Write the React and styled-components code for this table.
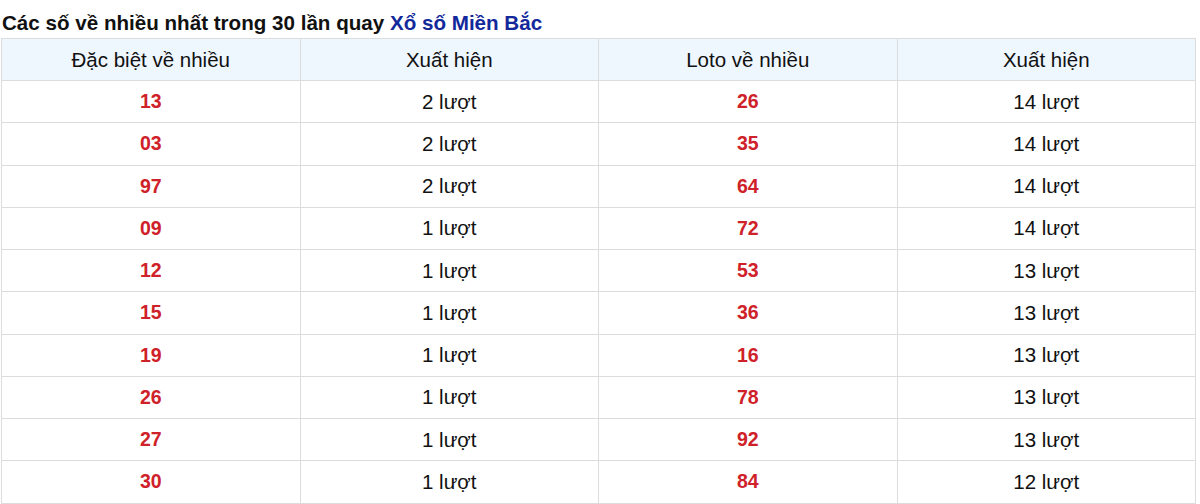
import React from "react";
import styled, { createGlobalStyle } from "styled-components";

const Global = createGlobalStyle`
  html, body { margin: 0; padding: 0; background: #fff; }
  body { font-family: "Liberation Sans", Arial, sans-serif; }
`;

const Wrap = styled.div`
  width: 1196px;
  padding: 10px 0 0 1px;
`;

const Title = styled.h3`
  margin: 0 0 3px 1px;
  font-size: 20.6px;
  line-height: 25px;
  font-weight: 700;
  color: #111;
`;

const Link = styled.span`
  color: #13299b;
`;

const Table = styled.table`
  width: 1195px;
  border-collapse: collapse;
  table-layout: fixed;
`;

const Th = styled.th`
  height: 41px;
  padding: 0;
  background: #eef6fe;
  border: 1px solid #dcdcdc;
  font-weight: 400;
  font-size: 20.5px;
  color: #111;
  text-align: center;
`;

const Td = styled.td`
  height: 41.25px;
  padding: 0;
  border: 1px solid #dcdcdc;
  font-size: ${(p) => (p.$num ? "19.5px" : "20.5px")};
  text-align: center;
  color: ${(p) => (p.$num ? "#cf2129" : "#111")};
  font-weight: ${(p) => (p.$num ? 700 : 400)};
`;

const rows = [
  ["13", 2, "26", 14],
  ["03", 2, "35", 14],
  ["97", 2, "64", 14],
  ["09", 1, "72", 14],
  ["12", 1, "53", 13],
  ["15", 1, "36", 13],
  ["19", 1, "16", 13],
  ["26", 1, "78", 13],
  ["27", 1, "92", 13],
  ["30", 1, "84", 12],
];

export default function App() {
  return (
    <Wrap>
      <Global />
      <Title>
        Các số về nhiều nhất trong 30 lần quay <Link>Xổ số Miền Bắc</Link>
      </Title>
      <Table>
        <thead>
          <tr>
            <Th>Đặc biệt về nhiều</Th>
            <Th>Xuất hiện</Th>
            <Th>Loto về nhiều</Th>
            <Th>Xuất hiện</Th>
          </tr>
        </thead>
        <tbody>
          {rows.map((r, i) => (
            <tr key={i}>
              <Td $num>{r[0]}</Td>
              <Td>{r[1]} lượt</Td>
              <Td $num>{r[2]}</Td>
              <Td>{r[3]} lượt</Td>
            </tr>
          ))}
        </tbody>
      </Table>
    </Wrap>
  );
}
